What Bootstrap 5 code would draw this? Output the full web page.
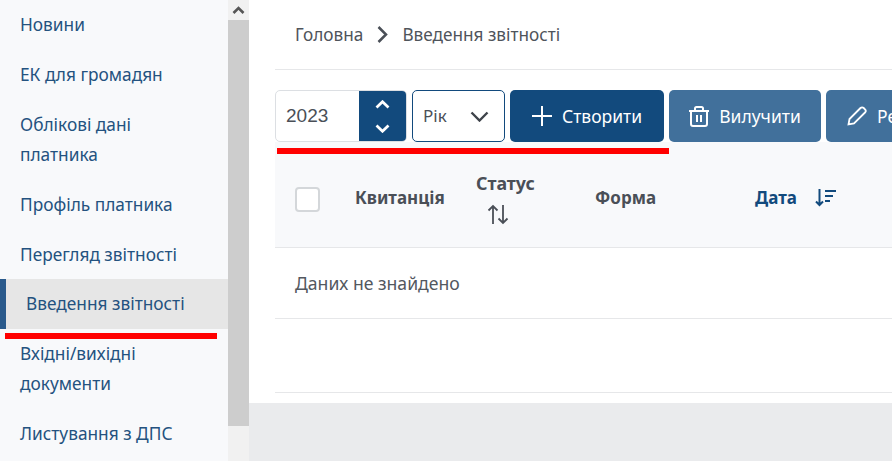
<!DOCTYPE html>
<html lang="uk">
<head>
<meta charset="utf-8">
<title>Введення звітності</title>
<link href="https://cdn.jsdelivr.net/npm/bootstrap@5.3.0/dist/css/bootstrap.min.css" rel="stylesheet">
<style>
html,body{height:461px;overflow:hidden;margin:0}
body{font-family:"Noto Sans","Open Sans",sans-serif;font-size:17px;color:#4a4f57;background:#fff}
.page-shell{width:892px;height:461px;overflow:hidden}
.side-col{width:228px;flex:none;background:#f8f9fb;height:461px;overflow:hidden;font-size:17.3px}
.side-link{display:block;padding:10px 20px;line-height:30px;color:#24527f;text-decoration:none}
.side-link.current{background:#e6e6e6;border-left:6px solid #2a5a8c;height:50px}
.side-current-wrap{margin-top:-1px}
.fake-scroll{width:21px;flex:none;background:#f1f1f1;height:461px}
.scroll-up{height:20px}
.scroll-thumb{height:406px;background:#cdcdcd}
.main-col{width:643px;flex:none;height:461px;background:#eaebed;overflow:hidden}
.main-card{height:403px;background:#fff;padding:0 0 0 26px}
.inner-wrap{width:900px}
.crumbs{height:70px;border-bottom:1px solid #e6e7e9;gap:14px;font-size:17.2px;padding:0 0 0 20px;color:#4f545b}
.toolbar{padding-top:20px;gap:5px;height:72px}
.num-field{width:132px;height:52px;border:1px solid #dcdfe3;border-radius:5px;overflow:hidden;background:#fff}
.num-value{width:84px;padding-left:10px;font-family:"Liberation Sans",sans-serif;font-size:19px;color:#4a4f57}
.num-spin{width:47px;background:#124a7d;gap:15px}
.period-select{width:93px;height:52px;border:1px solid #124a7d;border-radius:5px;padding:0 15px 0 10px;font-size:17px;color:#4a4f57;background:#fff}
.tool-btn{height:52px;border-radius:5px;border:0;color:#fff;font-size:17.5px;gap:10px;padding:0;white-space:nowrap}
.tool-btn:hover{color:#fff}
.btn-create{width:154px;background:#124a7d}
.btn-remove{width:152px;background:#41709b}
.btn-edit{width:160px;background:#41709b;justify-content:flex-start;padding-left:21px}
.head-row{height:106px;background:#f8f9fb;border-bottom:1px solid #e6e7e9;font-weight:700;font-size:17px;position:relative}
.head-cell{position:absolute;top:0;height:105px;padding-top:7px;display:flex;align-items:center}
.pick-box{left:20px;padding-top:10px}
.pick-box span{display:block;width:25px;height:25px;border:2px solid #d4d7da;border-radius:4px;background:#fff}
.c-receipt{left:80px}
.c-status{left:201px;flex-direction:column;align-items:flex-start;justify-content:center;gap:9px;line-height:24px;font-size:17.8px}
.c-status svg{margin-left:11px}
.c-form{left:320px}
.c-date{left:480px;color:#124a7d;gap:18px}
.empty-row{height:71px;border-bottom:1px solid #e6e7e9;padding-left:20px;font-size:17.6px;color:#53585f}
.spacer-row{height:74px;border-bottom:1px solid #e6e7e9}
.mark-line{position:absolute;background:#f00;height:6px}
.mark-a{left:5px;top:333px;width:212px}
.mark-b{left:277px;top:148px;width:392px}
</style>
</head>
<body>
<div class="page-shell d-flex position-relative">
  <nav class="side-col">
    <a class="side-link" href="#">Новини</a>
    <a class="side-link" href="#">ЕК для громадян</a>
    <a class="side-link" href="#">Облікові дані платника</a>
    <a class="side-link" href="#">Профіль платника</a>
    <a class="side-link" href="#">Перегляд звітності</a>
    <div class="side-current-wrap"><a class="side-link current" href="#">Введення звітності</a></div>
    <a class="side-link" href="#">Вхідні/вихідні документи</a>
    <a class="side-link" href="#">Листування з ДПС</a>
  </nav>
  <div class="fake-scroll">
    <div class="scroll-up d-flex align-items-center justify-content-center">
      <svg width="13" height="9" viewBox="0 0 13 9"><path d="M1.500 7 6.500 2l5 5" fill="none" stroke="#555" stroke-width="2.600"/></svg>
    </div>
    <div class="scroll-thumb"></div>
  </div>
  <main class="main-col">
    <div class="main-card">
      <div class="inner-wrap">
        <div class="crumbs d-flex align-items-center">
          <span>Головна</span>
          <svg width="11" height="17" viewBox="0 0 11 17"><path d="M1.500 1 9 8.500 1.500 16" fill="none" stroke="#4a4f57" stroke-width="2.500"/></svg>
          <span>Введення звітності</span>
        </div>
        <div class="toolbar d-flex">
          <div class="num-field d-flex">
            <div class="num-value d-flex align-items-center">2023</div>
            <div class="num-spin d-flex flex-column align-items-center justify-content-center">
              <svg width="15" height="9" viewBox="0 0 15 9"><path d="M1.500 7.500 7.500 1.700l6 5.800" fill="none" stroke="#fff" stroke-width="2.700"/></svg>
              <svg width="15" height="9" viewBox="0 0 15 9"><path d="M1.500 1.500 7.500 7.300l6-5.800" fill="none" stroke="#fff" stroke-width="2.700"/></svg>
            </div>
          </div>
          <div class="period-select d-flex align-items-center justify-content-between">
            <span>Рік</span>
            <svg width="19" height="11" viewBox="0 0 19 11"><path d="M1.500 1.500 9.500 9.500l8-8" fill="none" stroke="#3e434a" stroke-width="2.400"/></svg>
          </div>
          <button class="btn tool-btn btn-create d-flex align-items-center justify-content-center" type="button">
            <svg width="20" height="20" viewBox="0 0 20 20"><path d="M10 0v20M0 10h20" stroke="#fff" stroke-width="2"/></svg>Створити
          </button>
          <button class="btn tool-btn btn-remove d-flex align-items-center justify-content-center" type="button">
            <svg width="20" height="21" viewBox="0 0 20 21"><path d="M0 5h20M6 5V2.500C6 1.700 6.700 1 7.500 1h5c.8 0 1.500.7 1.500 1.500V5M2 5v13c0 1.100.9 2 2 2h12c1.100 0 2-.9 2-2V5M8 9v7M12 9v7" fill="none" stroke="#fff" stroke-width="2"/></svg>Вилучити
          </button>
          <button class="btn tool-btn btn-edit d-flex align-items-center" type="button">
            <svg width="20" height="20" viewBox="0 0 20 20"><path d="M1.500 18.500l1-5.500L13.500 2c.9-.9 2.300-.9 3.200 0l1.300 1.300c.9.900.9 2.300 0 3.200L7 17.500z" fill="none" stroke="#fff" stroke-width="1.800"/></svg>Редагувати
          </button>
        </div>
        <div class="head-row">
          <div class="head-cell pick-box"><span></span></div>
          <div class="head-cell c-receipt">Квитанція</div>
          <div class="head-cell c-status">
            <div>Статус</div>
            <svg width="22" height="21" viewBox="0 0 22 21"><path d="M6 20V2M1.500 6.500 6 2l4.500 4.500M16 1v18M11.500 14.500 16 19l4.500-4.500" fill="none" stroke="#4a4f57" stroke-width="1.800"/></svg>
          </div>
          <div class="head-cell c-form">Форма</div>
          <div class="head-cell c-date">
            <span>Дата</span>
            <svg width="21" height="18" viewBox="0 0 21 18"><path d="M4.500 0v16M1 12.500l3.500 3.500 3.500-3.500M10 2h11M10 7h8M10 12h5" fill="none" stroke="#124a7d" stroke-width="2"/></svg>
          </div>
        </div>
        <div class="empty-row d-flex align-items-center">Даних не знайдено</div>
        <div class="spacer-row"></div>
      </div>
    </div>
  </main>
  <div class="mark-line mark-a"></div>
  <div class="mark-line mark-b"></div>
</div>
<script src="https://cdn.jsdelivr.net/npm/bootstrap@5.3.0/dist/js/bootstrap.bundle.min.js"></script>
</body>
</html>
